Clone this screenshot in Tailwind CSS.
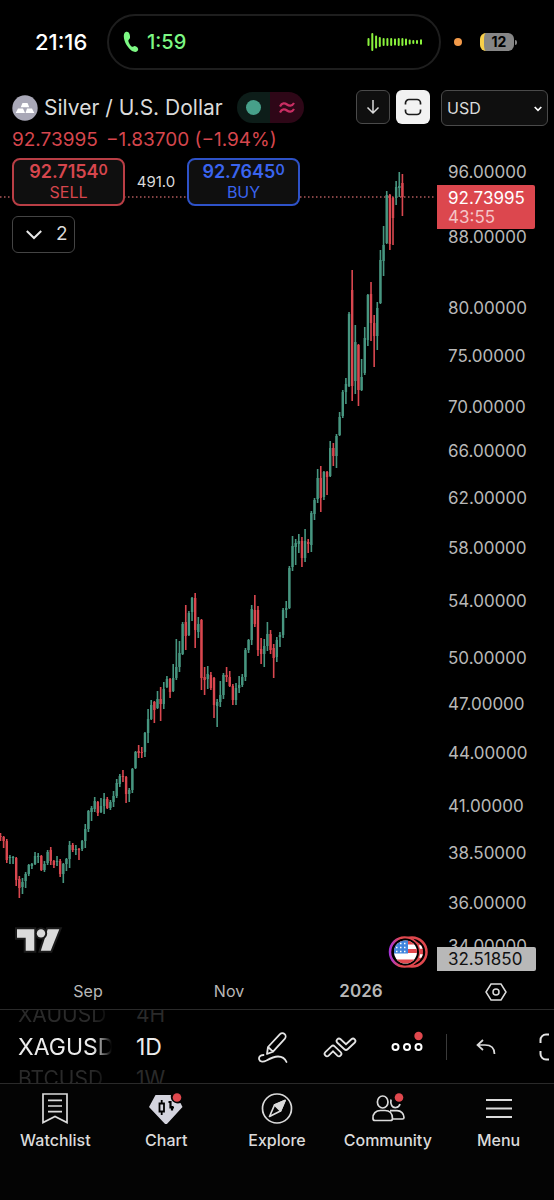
<!DOCTYPE html>
<html lang="en">
<head>
    <meta charset="UTF-8">
    <meta name="viewport" content="width=device-width, initial-scale=1.0">
    <title>Silver / U.S. Dollar</title>
    <script src="https://cdn.jsdelivr.net/npm/@tailwindcss/browser@4"></script>
</head>
<body class="bg-black">
<div class="flex min-h-screen flex-col overflow-hidden bg-black font-['Inter','Liberation_Sans',sans-serif] text-[#dbdbdb]">

    <!-- Status bar -->
    <header class="flex h-[84px] items-center pl-[35px] pr-[37px]">
        <span class="w-[72px] text-[22px] font-medium text-white">21:16</span>
        <div class="flex h-14 flex-1 items-center justify-between rounded-full border-2 border-[#1e1e1e] pl-[14px] pr-4">
            <div class="flex items-center gap-2">
                <svg class="h-[22px] w-4" viewBox="0 0 16 22" fill="#7df884"><path d="M3.2 .8C1 1.4 .4 4 1 7.400C2 13 6.500 19 10.500 20.600C12.800 21.500 14.800 20.500 15.200 18.600C15.500 17 13.500 15.200 11.800 15C10.500 14.900 9.900 16.300 8.900 15.700C7.300 14.600 5.700 11.800 5.300 9.900C5.100 8.700 6.700 8.400 7 7C7.300 5 6.500 2.600 5.700 1.600C5 .8 4.200 .5 3.200 .8Z"/></svg>
                <span class="text-xl font-medium text-[#7df884]">1:59</span>
            </div>
            <svg class="h-5 w-14" viewBox="0 0 56 20" stroke="#8af23c" stroke-width="2" stroke-linecap="round"><path d="M1.500 7v6M5.300 2v16M9.100 4.500v11M12.800 6v8M16.600 7v6M20.400 7v6M24.200 7v6M28 7.500v5M31.700 7v6M35.400 7v6M39 7.500v5M42.700 8.500v3M46.300 9v2M50 9v2M54 8.300v3.400"/></svg>
        </div>
        <div class="ml-[13px] size-2 rounded-full bg-[#f39a4a]"></div>
        <div class="ml-[18px] flex items-center gap-px">
            <div class="flex h-[18px] w-[34px] items-center justify-center rounded-md border-l-4 border-[#f8cf4a] bg-[#868686] text-sm font-bold text-black">12</div>
            <div class="h-[5px] w-[2px] rounded-r bg-[#868686]"></div>
        </div>
    </header>

    <!-- Chart with its legend on top -->
    <main class="grid">
        <div class="col-start-1 row-start-1 flex h-[891px]">
            <div class="flex flex-1 justify-end overflow-hidden">
                <svg id="plot" class="h-[891px] w-[437px] shrink-0" viewBox="0 84 437 891" role="img" aria-label="Silver daily candles">
                    <path d="M0 197H434" stroke="#b05a5c" stroke-width="1.300" stroke-dasharray="1.500 2.500"/>
                    <g id="candles"></g>
                    <!-- Logo -->
                    <g fill="#dbdbdb" stroke="#1b1b1b" stroke-width="4" paint-order="stroke">
                        <path d="M17 929.300h17.300v21.400h-8.600v-13H17z"/>
                        <path d="M47.700 929.300h11.600l-8.600 21.400h-9.900z"/>
                        <circle cx="41" cy="933.400" r="4.200"/>
                    </g>
                    <!-- Economic events -->
                    <defs>
                        <linearGradient id="ring"><stop offset="0" stop-color="#a834d8"/><stop offset=".35" stop-color="#e0484e"/></linearGradient>
                        <clipPath id="flag"><circle cx="405.500" cy="952" r="11.500"/></clipPath>
                        <clipPath id="flagBack"><circle cx="411.500" cy="952" r="11.500"/></clipPath>
                    </defs>
                    <circle cx="412" cy="952" r="14.500" fill="#000" stroke="#e0484e" stroke-width="2.500"/>
                    <g clip-path="url(#flagBack)">
                        <path d="M400 940h24v25h-24z" fill="#e0484e"/>
                        <path d="M416 947h8M416 956h8" stroke="#fff" stroke-width="3.500"/>
                    </g>
                    <circle cx="404.500" cy="952" r="14.500" fill="#000" stroke="url(#ring)" stroke-width="2.500"/>
                    <circle cx="405.500" cy="952" r="13.500" fill="#000"/>
                    <g clip-path="url(#flag)">
                        <path d="M393 940h25v25h-25z" fill="#fff"/>
                        <path d="M393 942.500h25M393 951h25M393 961.500h25" stroke="#e0484e" stroke-width="4"/>
                        <path d="M393 940h15v13.500h-15z" fill="#3f85dd"/>
                        <path d="M396 943.500h12M396 947.500h12M396 951.500h12" stroke="#fff" stroke-width="1.500" stroke-dasharray="1.500 2.500"/>
                    </g>
                </svg>
            </div>
            <svg id="priceAxis" class="h-[891px] w-[117px] shrink-0" viewBox="437 84 117 891" font-size="17" fill="#b8b8b8"></svg>
        </div>

        <div class="z-10 col-start-1 row-start-1 self-start pl-3 pr-[6px] pt-[5px]">
            <div class="flex h-[37px] items-center">
                <svg class="size-[26px]" viewBox="0 0 26 26"><circle cx="13" cy="13" r="12.700" fill="#a9a8b7"/><path d="M10.500 8h5l1.800 4.300H8.700zM6 13.500h5l2 4.500H3.700zM15 13.500h5l2.300 4.500H13.500z" fill="#fff"/></svg>
                <h1 class="ml-[6px] whitespace-nowrap text-[21px]">Silver / U.S. Dollar</h1>
                <div class="ml-[14px] flex h-[31px] w-[67px] shrink-0 overflow-hidden rounded-full">
                    <div class="flex flex-1 items-center justify-center bg-[#0d1d19]"><span class="size-[15px] rounded-full bg-[#47a08a]"></span></div>
                    <div class="flex flex-1 items-center justify-center bg-[#2e0717]">
                        <svg class="h-3 w-4" viewBox="0 0 16 12" fill="none" stroke="#c92e63" stroke-width="2.200"><path d="M1 4.500C3 .5 6 1 8 2.500S13 4.500 15 1M1 10.500C3 6.500 6 7 8 8.500S13 10.500 15 7"/></svg>
                    </div>
                </div>
                <div class="ml-auto flex shrink-0 items-start gap-[6px]">
                    <button class="flex size-[34px] items-center justify-center rounded-md border border-[#4a4a4a] bg-[#0f0f0f]" aria-label="Download">
                        <svg class="size-4" viewBox="0 0 16 16" fill="none" stroke="#dbdbdb" stroke-width="1.500"><path d="M8 1v13M2.500 8.500L8 14l5.500-5.500"/></svg>
                    </button>
                    <button class="flex size-[34px] items-center justify-center rounded-md bg-[#f2f2f2]" aria-label="Fit screen">
                        <svg class="size-[18px]" viewBox="0 0 18 18" fill="none" stroke="#1a1a1a" stroke-width="1.700"><path d="M1.500 6.500V5A3.500 3.500 0 0 1 5 1.500h8A3.500 3.500 0 0 1 16.500 5v1.500M1.500 11.500V13A3.500 3.500 0 0 0 5 16.500h8a3.500 3.500 0 0 0 3.500-3.500v-1.500"/></svg>
                    </button>
                    <div class="relative ml-[5px]">
                        <select class="h-9 w-[107px] appearance-none rounded-md border border-[#4a4a4a] bg-[#0f0f0f] pl-[5px] text-base" aria-label="Currency"><option>USD</option></select>
                        <svg class="pointer-events-none absolute right-[6px] top-4 h-[6px] w-2" viewBox="0 0 8 6" fill="none" stroke="#fff" stroke-width="1.700"><path d="M.7 1L4 4.300L7.300 1"/></svg>
                    </div>
                </div>
            </div>
            <p class="mt-[2px] flex gap-2 text-[19px] leading-6 text-[#d6464d]"><span>92.73995</span><span>−1.83700 (−1.94%)</span></p>
            <div class="mt-[6px] flex items-center">
                <button class="h-12 w-[113px] rounded-lg border-2 border-[#b93e45] bg-[#0f0f0f] text-[#d6464d]">
                    <span class="flex items-start justify-center text-lg font-semibold leading-5">92.7154<span class="text-sm leading-4">0</span></span>
                    <span class="block text-base leading-5">SELL</span>
                </button>
                <span class="w-[62px] text-center text-[15px]">491.0</span>
                <button class="h-12 w-[113px] rounded-lg border-2 border-[#2e52c8] bg-[#0f0f0f] text-[#3a64ee]">
                    <span class="flex items-start justify-center text-lg font-semibold leading-5">92.7645<span class="text-sm leading-4">0</span></span>
                    <span class="block text-base leading-5">BUY</span>
                </button>
            </div>
            <button class="mt-[10px] flex h-[37px] w-[63px] items-center gap-[14px] rounded-md border border-[#444] pl-[13px] text-[19px]" aria-label="Show indicators">
                <svg class="h-[10px] w-4" viewBox="0 0 16 10" fill="none" stroke="#e8e8e8" stroke-width="2"><path d="M.8 1L8 8L15.200 1"/></svg>2
            </button>
        </div>
    </main>

    <!-- Time axis -->
    <div class="flex h-[34px] items-center">
        <div class="flex flex-1 justify-end overflow-hidden">
            <svg class="h-[34px] w-[437px] shrink-0" viewBox="0 0 437 34" fill="#b8b8b8" font-size="16" text-anchor="middle">
                <text x="88" y="22">Sep</text><text x="229" y="22">Nov</text><text x="361" y="22" font-size="17" font-weight="600">2026</text>
            </svg>
        </div>
        <button class="flex w-[117px] justify-center" aria-label="Chart settings">
            <svg class="h-[18px] w-[22px]" viewBox="0 0 22 18" fill="none" stroke="#dbdbdb" stroke-width="1.500"><path d="M6 1h10l5 8l-5 8H6L1 9z"/><circle cx="11" cy="9" r="3"/></svg>
        </button>
    </div>

    <!-- Toolbar -->
    <div class="flex h-[75px] items-center overflow-hidden border-y border-[#2a2a2a] text-[#ececec]">
        <div class="ml-[18px] flex w-[94px] shrink-0 flex-col overflow-hidden text-[21px] leading-8 [mask-image:linear-gradient(to_right,#000_80%,transparent)]">
            <span class="text-[#2a2a2a]">XAUUSD</span>
            <span class="text-[23px] leading-8">XAGUSD</span>
            <span class="text-[#2a2a2a]">BTCUSD</span>
        </div>
        <div class="ml-6 flex min-w-[102px] flex-1 flex-col text-[21px] leading-8">
            <span class="text-[#2a2a2a]">4H</span>
            <span class="text-[23px] leading-8">1D</span>
            <span class="text-[#2a2a2a]">1W</span>
        </div>
        <button class="flex w-[67px] shrink-0 justify-center" aria-label="Draw">
            <svg class="size-8" viewBox="0 0 32 32" fill="none" stroke="#e4e4e4" stroke-width="1.800" stroke-linejoin="round" stroke-linecap="round"><path d="M10 23l1-7L23 3.200a3.200 3.200 0 0 1 4.700 4.600L16 20.700zM11 16l5 4.700M6.500 24C3 24 1.500 26 2.200 28.500C3 31.200 6.500 31 9.500 29.500C14 27 17 25.500 21 25.500C25.500 25.500 28 27.500 29.500 31"/></svg>
        </button>
        <button class="flex w-[67px] shrink-0 justify-center" aria-label="Indicators">
            <svg class="h-6 w-9" viewBox="0 0 36 24" fill="none" stroke-linecap="round" stroke-linejoin="round">
                <path d="M17 6l7 6.500l7-6.500M5 18.800l6-5.800l6 5.800" stroke="#e4e4e4" stroke-width="6.500"/>
                <path d="M17 6l7 6.500l7-6.500M5 18.800l6-5.800l6 5.800" stroke="#000" stroke-width="3"/>
            </svg>
        </button>
        <button class="flex w-[68px] shrink-0 justify-center" aria-label="More">
            <svg class="h-8 w-[34px]" viewBox="0 0 34 32" fill="none" stroke="#fff" stroke-width="2"><circle cx="5.500" cy="16" r="3"/><circle cx="17" cy="16" r="3"/><circle cx="28.500" cy="16" r="3"/><circle cx="28.500" cy="5" r="4.200" fill="#e0484e" stroke="none"/></svg>
        </button>
        <div class="ml-[5px] h-[26px] w-px shrink-0 bg-[#3a3a3a]"></div>
        <button class="ml-[29px] shrink-0" aria-label="Undo">
            <svg class="h-4 w-5" viewBox="0 0 20 16" fill="none" stroke="#dbdbdb" stroke-width="1.700"><path d="M7 1L1.500 6L7 11M1.500 6H9C15 6 18.500 9 18.500 15"/></svg>
        </button>
        <button class="ml-[43px] w-[15px] shrink-0 overflow-hidden" aria-label="Fullscreen">
            <svg class="h-7 w-7 max-w-none" viewBox="0 0 28 28" fill="none" stroke="#e4e4e4" stroke-width="2"><path d="M1.500 10V7A5.500 5.500 0 0 1 7 1.500h3M1.500 18v3A5.500 5.500 0 0 0 7 26.500h3M18 1.500h3A5.500 5.500 0 0 1 26.500 7v3M18 26.500h3a5.500 5.500 0 0 0 5.500-5.500v-3"/></svg>
        </button>
    </div>

    <!-- Tab bar -->
    <nav class="grid flex-1 grid-cols-5 items-start bg-[#040404] pt-2 text-base font-medium leading-5">
        <a href="#" class="flex flex-col items-center gap-[6px]">
            <svg class="size-8" viewBox="0 0 32 32" fill="none" stroke="#dbdbdb" stroke-width="1.700"><path d="M4 2h24v28.500l-12-6l-12 6zM9 8.300h14M9 14h14M9 19.700h14"/></svg>
            Watchlist
        </a>
        <a href="#" class="flex flex-col items-center gap-[6px]">
            <svg class="h-8 w-9" viewBox="0 0 36 32"><path d="M7.500 3H23c-1 4 1.500 8 7 8.500l2.500-.5l2 4L18 33L1 15z" fill="#d4d4de"/><path d="M11.500 11.500h4.500v8h-4.500zM13.700 8v3.500M13.700 19.500V23" fill="none" stroke="#000" stroke-width="1.800"/><path d="M20.500 10h2v5.500H26M24 14v4.500" fill="none" stroke="#000" stroke-width="2.200"/><circle cx="29" cy="5.500" r="4.300" fill="#e0484e"/></svg>
            Chart
        </a>
        <a href="#" class="flex flex-col items-center gap-[6px]">
            <svg class="size-8" viewBox="0 0 32 32" fill="none" stroke="#dbdbdb" stroke-width="1.700" stroke-linejoin="round"><circle cx="16" cy="16.500" r="14.500"/><path d="M24 8.500L19.500 19L13.500 13z" fill="#dbdbdb"/><path d="M24 8.500L13.500 13L8.500 24.500L19.500 19z"/></svg>
            Explore
        </a>
        <a href="#" class="flex flex-col items-center gap-[6px]">
            <svg class="h-8 w-9" viewBox="0 0 36 32" fill="none" stroke="#dbdbdb" stroke-width="1.700"><ellipse cx="12.700" cy="10" rx="5.300" ry="6"/><path d="M21 7.500C20 13 22.500 16 26 15.500C28 15.200 29.500 14 30 12"/><path d="M3 26.500C2.500 21.500 6 18.500 10.500 18.500h4.500C19.500 18.500 22.500 21.500 22.500 26.500C22.500 28 21.500 28.500 20.500 28.500H5C4 28.500 3 28 3 26.500zM20 18.700h7C31 18.700 34 21.500 34 25.500C34 26.500 33.500 27 32.500 27H22.500"/><circle cx="29" cy="5.500" r="4.300" fill="#e0484e" stroke="none"/></svg>
            Community
        </a>
        <a href="#" class="flex flex-col items-center gap-[6px]">
            <svg class="size-8" viewBox="0 0 32 32" stroke="#dbdbdb" stroke-width="1.800"><path d="M3 8h26M3 16.500h26M3 25h26"/></svg>
            Menu
        </a>
    </nav>
</div>

<script>
    // colour, high, body top, body bottom, low (y in plot units)
    const candles = `r833,836,837,841 r836,837,841,848 r839,841,860,863 g855,857,858,864 g856,857,858,864 r857,858,880,886 r876,879,888,898 g878,882,887,894
        g872,874,881,888 g864,865,874,876 g863,864,866,869 g852,856,864,865 g853,856,857,863 r855,856,870,871 g861,864,870,872 g850,852,863,865
        r847,850,861,865 r860,861,865,868 g856,861,862,866 r859,861,874,877 g863,864,874,883 g858,859,864,871 g841,845,859,868 r843,845,850,852
        g845,849,850,855 r848,849,850,860 g840,841,849,851 g824,829,841,848 g810,811,829,832 g806,808,812,821 g797,801,809,812 r801,802,813,816
        g798,806,812,813 g793,799,806,814 r797,799,808,809 g800,802,808,810 g791,796,802,807 g779,783,796,798 g774,776,784,787 r770,776,777,782
        r776,777,794,803 g788,790,794,802 g768,769,790,793 g751,752,768,769 r745,751,753,758 r747,752,753,758 g732,733,752,757 g709,719,733,743
        g700,705,719,720 r701,702,710,723 g691,699,708,709 r687,699,704,721 g682,689,704,709 g676,679,687,688 r678,679,692,698 g664,678,691,692
        g639,667,678,680 g641,653,667,672 g622,624,654,655 r605,622,636,650 g611,613,635,636 g597,598,612,621 r593,598,630,648 g617,624,632,638
        r619,620,678,690 r667,677,680,695 g666,674,679,689 r672,675,688,690 r677,678,705,718 g699,702,706,727 g681,695,702,707 g673,675,695,699
        r667,675,677,682 r671,677,686,687 r684,686,700,705 g683,688,700,705 g676,685,688,693 g674,677,685,687 g648,650,677,681 g639,640,650,653
        g605,609,640,645 r595,610,624,627 r606,610,650,656 r638,649,654,664 g639,646,654,667 g622,634,646,651 r630,634,650,654 r644,648,658,678
        g637,640,657,662 g632,635,637,647 g608,610,635,638 g601,608,610,618 g566,568,608,609 g536,546,567,571 g539,543,547,565 g534,541,544,553
        r537,541,558,567 g529,541,558,562 r539,542,544,553 g511,513,545,552 g498,500,514,520 g469,478,499,503 r466,478,498,512 g471,472,497,500
        r471,472,477,495 g441,448,476,477 r443,448,456,466 g434,436,456,468 g412,417,435,436 g390,392,416,418 g378,384,392,404 g312,314,386,387
        r270,290,386,401 g325,342,381,394 r344,345,390,406 g359,377,390,391 g327,338,373,375 g294,295,340,346 r282,294,323,341 r315,323,336,367
        g302,308,336,350 g250,260,303,304 g226,245,261,276 g191,195,243,244 r194,195,244,250 r197,198,218,245 g181,187,198,205 g172,186,188,197
        r174,183,197,216`.split(/\s+/);

    document.getElementById('candles').innerHTML = candles.map((c, i) => {
        const [high, top, bottom, low] = c.slice(1).split(',').map(Number);
        const x = 0.5 + i * 3.14;
        const color = c[0] === 'g' ? '#479680' : '#d9474f';
        return `<g fill="${color}"><rect x="${x - 0.8}" y="${high}" width="1.6" height="${low - high}"/><rect x="${x - 1.2}" y="${top}" width="2.4" height="${bottom - top}"/></g>`;
    }).join('');

    // logarithmic price scale
    const priceToY = p => 172 + 745.3 * Math.log(96 / p);
    const prices = [96, 88, 80, 75, 70, 66, 62, 58, 54, 50, 47, 44, 41, 38.5, 36, 34];
    const label = (text, y, fill) => `<text x="448" y="${Math.round(y) + 6}" fill="${fill}">${text}</text>`;
    document.getElementById('priceAxis').innerHTML =
        prices.map(p => label(p.toFixed(5), priceToY(p), '#b8b8b8')).join('') +
        '<path d="M437 185h96a2 2 0 0 1 2 2v40a2 2 0 0 1-2 2h-96z" fill="#dc474e"/>' +
        label('92.73995', 198, '#fff') + label('43:55', 217, '#f5c4c6') +
        '<path d="M437 947h97a2 2 0 0 1 2 2v20a2 2 0 0 1-2 2h-97z" fill="#b8b8b8"/>' +
        label('32.51850', 959, '#111');
</script>
</body>
</html>
